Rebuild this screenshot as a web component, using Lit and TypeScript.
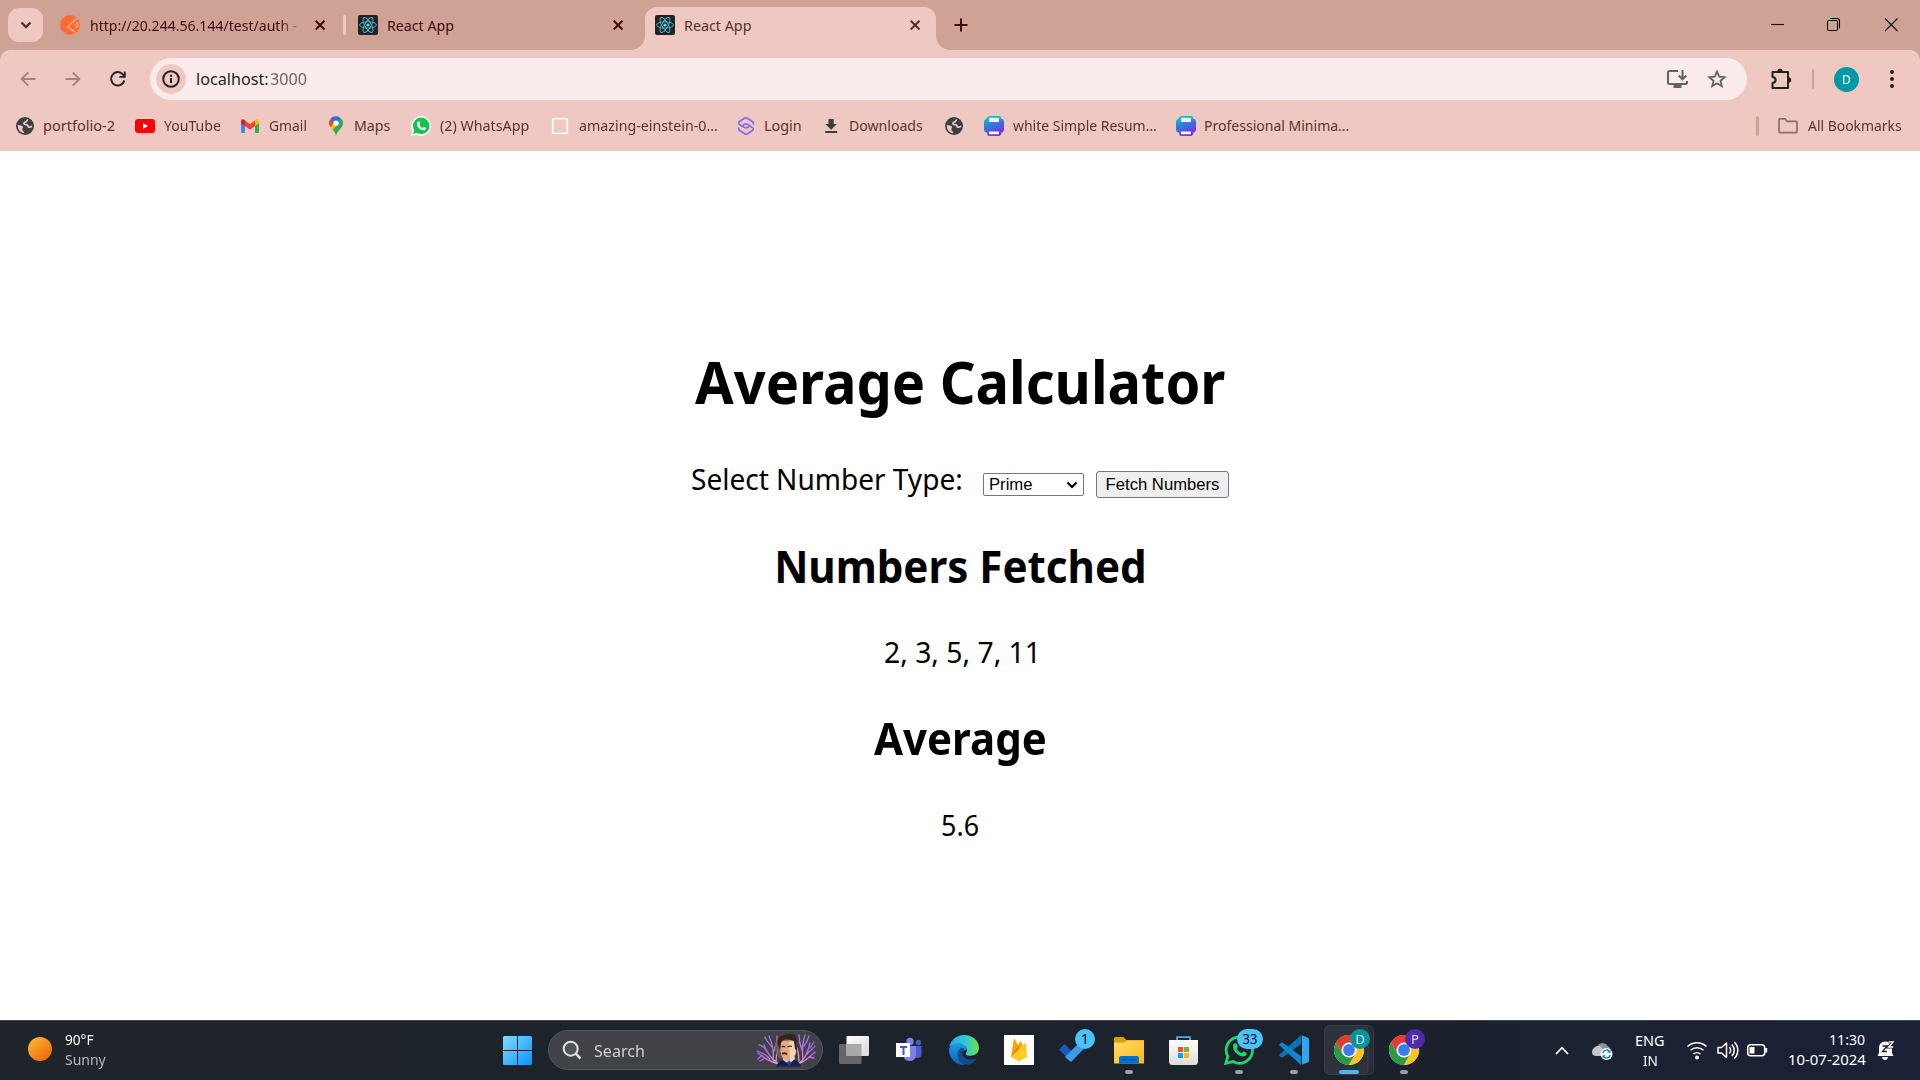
import { LitElement, html, css, svg, nothing } from "lit";
import { customElement, property } from "lit/decorators.js";

/* Single line of text whose glyphs span exactly `w` pixels. */
@customElement("fit-text")
class FitText extends LitElement {
  @property() text = "";
  @property({ type: Number }) w = 10;

  static styles = css`
    :host { display: inline-block; white-space: pre; flex: none; }
    .line { display: inline-block; transform-origin: 0 50%; width: 0; }
  `;

  render() {
    const cs = getComputedStyle(this);
    const ctx = document.createElement("canvas").getContext("2d")!;
    ctx.font = `${cs.fontWeight} ${cs.fontSize} ${cs.fontFamily}`;
    const m = ctx.measureText(this.text);
    const ink = m.actualBoundingBoxLeft + m.actualBoundingBoxRight || m.width;
    const scale = this.w / ink;
    this.style.width = `${this.w}px`;
    return html`<span class="line" style="transform: scaleX(${scale.toFixed(4)}) translateX(${m.actualBoundingBoxLeft.toFixed(2)}px)">${this.text}</span>`;
  }
}

const t = (text: string, w: number, cls = "") => html`<fit-text class=${cls} .text=${text} .w=${w}></fit-text>`;

/* ---------- browser icons ---------- */
const closeIcon = html`<svg class="close" width="20" height="20" viewBox="0 0 20 20"><path d="M5.700 5.700l8.800 8.800M14.500 5.700l-8.800 8.800" stroke="currentColor" stroke-width="2" fill="none"/></svg>`;

const reactIcon = html`<svg width="20" height="20" viewBox="0 0 20 20">
  <rect width="20" height="20" rx="2" fill="#222"/>
  <g fill="none" stroke="#4fb3cc" stroke-width=".95">
    <ellipse cx="10" cy="10" rx="8.400" ry="3.200"/>
    <ellipse cx="10" cy="10" rx="8.400" ry="3.200" transform="rotate(60 10 10)"/>
    <ellipse cx="10" cy="10" rx="8.400" ry="3.200" transform="rotate(120 10 10)"/>
  </g><circle cx="10" cy="10" r="1.600" fill="#61dafb"/></svg>`;

const postmanIcon = html`<svg width="20" height="20" viewBox="0 0 20 20">
  <circle cx="10" cy="10" r="10" fill="#ff6c37"/>
  <path d="M17 3.300L7.600 11.600l7.400 5.600" fill="none" stroke="#e9b9a6" stroke-width="1.200"/>
  <path d="M17.200 7.300q2.300 2.400.1 5.200l-2-2.200z" fill="none" stroke="#e9b9a6" stroke-width=".8"/></svg>`;

const globe = html`<svg width="20" height="20" viewBox="0 0 20 20">
  <circle cx="10" cy="10" r="9" fill="#3c4043"/>
  <path d="M12.400 3.300c.2 1.500-.9 2.100-1.900 2.700-1 .5-2 .9-1.500 1.900.5.8 2.500.5 3.400 1.200.8.6.3 1.800 1.500 2.100 1 .2 1.600-.7 3.200-.8" fill="none" stroke="#efc9c1" stroke-width="1.700"/>
  <path d="M2.800 8.800c2 1 4.400.6 5.200 2 .4 1-.6 1.600-.8 2.400 0 1.600 1.900 1.900 2.300 4C4.800 17 2.400 13 2.800 8.800z" fill="#efc9c1"/></svg>`;

const youtube = html`<svg width="20" height="20" viewBox="0 0 20 20"><rect y="3" width="20" height="14" rx="3" fill="#f00"/><path d="M8 7v6l5-3z" fill="#fff"/></svg>`;
const gmail = html`<svg width="20" height="20" viewBox="0 0 20 20">
  <path d="M1 6v9.700Q1 17 2.300 17H5V9z" fill="#4285f4"/><path d="M19 6v9.700q0 1.300-1.300 1.300H15V9z" fill="#34a853"/>
  <path d="M5 4.500L10 8.300l5-3.800V10l-5 3.700L5 10z" fill="#ea4335"/>
  <path d="M1 5.500Q1 3.300 2.900 3.200 3.700 3.200 5 4.500V10L1 7.200z" fill="#c5221f"/><path d="M19 5.500q0-2.200-1.900-2.300-.8 0-2.100 1.300V10l4-2.800z" fill="#fbbc04"/></svg>`;
const maps = html`<svg width="20" height="20" viewBox="0 0 20 20">
  <path d="M10 20c-.8-3.500-2-4.900-3.500-6.800L14.900 2.700Q17 4.500 17 7.300c0 5-5.500 6.500-7 12.700z" fill="#34a853"/>
  <path d="M3 7.300Q3 4.500 4.700 2.600L9 6.100 4.600 11Q3 9.200 3 7.300z" fill="#ea4335"/>
  <path d="M4.700 2.600Q6.600.3 10 .3q3 0 4.900 2.300L11.600 6.500 10 7.200 8 5.400z" fill="#1a73e8"/>
  <path d="M6 12.600l5.500-6 3.400-4Q17 4.500 17 7.300l-7 3z" fill="#34a853"/>
  <path d="M4.600 10.700L8 7l3.800 1.500-5 5.100z" fill="#fbbc04"/>
  <circle cx="10" cy="7.200" r="2.600" fill="#fff"/></svg>`;
const whatsapp = html`<svg width="20" height="20" viewBox="0 0 20 20">
  <path d="M0 20l1.500-5.300A9.900 9.900 0 1 1 5.300 18.600z" fill="#fff"/><circle cx="10.200" cy="9.800" r="8.300" fill="#12c24a"/>
  <path d="M2 18l1.200-4.300 3 3.100z" fill="#12c24a"/>
  <path d="M6.300 6.200c.9-1.300 1.900-1 2.200-.2l.6 1.500c.1.500-.7 1-.7 1.400.6 1.400 1.700 2.400 3.200 3 .5 0 .9-1.100 1.400-1l1.800.9c.6.500 0 1.800-.9 2.200-2 1-4.900-.4-6.500-2.400C6.100 9.900 5.400 8 6.300 6.200z" fill="#fff"/></svg>`;
const box = html`<svg width="20" height="20" viewBox="0 0 20 20"><rect x="2.700" y="2.700" width="14.600" height="14.600" fill="none" stroke="#fff" stroke-width="1.600"/></svg>`;
const login = html`<svg width="20" height="20" viewBox="0 0 20 20"><g fill="none" stroke="#7b6ff2" stroke-width="1.700" stroke-linejoin="round">
  <path d="M17.300 8.600V6.200L11.500 2.300Q10 1.400 8.500 2.300L3.200 5.700Q2.200 7 3.200 8.200L8.600 11.600Q10 12.300 11.400 11.600L13.400 10.200"/>
  <path d="M2.700 11.400V13.800L8.500 17.700Q10 18.600 11.500 17.700L16.800 14.300Q17.800 13 16.800 11.800L11.400 8.200Q10 7.500 8.600 8.200L6.600 9.800"/></g></svg>`;
const download = html`<svg width="20" height="20" viewBox="0 0 20 20"><path d="M7.500 3h5.200v5h3.200L10.100 13.700 4.300 8h3.200zM4.200 15h12v2h-12z" fill="#3c4043"/></svg>`;
const printer = (id: string) => html`<svg width="20" height="20" viewBox="0 0 20 20">
  <defs><linearGradient id=${id} x1=".2" y1="0" x2=".6" y2="1"><stop offset="0" stop-color="#00cfd0"/><stop offset=".5" stop-color="#3a70dd"/><stop offset="1" stop-color="#7d2ae8"/></linearGradient></defs>
  <path d="M5.500 0h9Q17 0 17 2.500q3 .6 3 3.500v7.500q0 2.500-2.500 3Q17 20 14.500 20h-9Q3 20 3 16.500.0 16 0 13.500V6Q0 3 3 2.500 3 0 5.500 0z" fill="url(#${id})"/>
  <path d="M5 1.800h10V6H5zM5 15.500h10v2.700H5z" fill="#fff"/></svg>`;

const bookmarks = [
  { icon: globe, text: "portfolio-2", w: 70.700, cell: 120 },
  { icon: youtube, text: "YouTube", w: 56.700, cell: 105 },
  { icon: gmail, text: "Gmail", w: 37.300, cell: 86 },
  { icon: maps, text: "Maps", w: 35.300, cell: 85 },
  { icon: whatsapp, text: "(2) WhatsApp", w: 89.300, cell: 139 },
  { icon: box, text: "amazing-einstein-0...", w: 138, cell: 186 },
  { icon: login, text: "Login", w: 35.700, cell: 85 },
  { icon: download, text: "Downloads", w: 72.700, cell: 123 },
  { icon: globe, text: "", w: 0, cell: 40 },
  { icon: printer("pa"), text: "white Simple Resum...", w: 143, cell: 192 },
  { icon: printer("pb"), text: "Professional Minima...", w: 143.500, cell: 190 },
];

/* ---------- taskbar icons, each in a 55x60 cell centred on x = 27 ---------- */
const dot = svg`<rect x="23" y="50" width="8" height="4" rx="2" fill="#9a9da3"/>`;
const chromeMark = svg`
  <circle cx="27" cy="30" r="15" fill="#fff"/>
  <path d="M27 30L14 22.500A15 15 0 0 1 40 22.500z" fill="#e33b2e"/>
  <path d="M14 22.500A15 15 0 0 0 27 45L33.500 33.800 27 30 20.500 33.800z" fill="#2a9a46"/>
  <path d="M40 22.500A15 15 0 0 1 27 45L33.500 33.800 33.500 24 27 22.500z" fill="#fcc31e"/>
  <path d="M27 22.500H40A15 15 0 0 0 14 22.500L20.500 33.800z" fill="#e33b2e"/>
  <circle cx="27" cy="30" r="7.500" fill="#fff"/><circle cx="27" cy="30" r="5.900" fill="#3a7bf0"/>`;

const apps = [
  // task view
  svg`<defs><linearGradient id="tv" x1="0" y1="0" x2="1" y2="1"><stop offset="0" stop-color="#fff"/><stop offset="1" stop-color="#d8d8d8"/></linearGradient></defs>
    <rect x="12" y="24" width="22.500" height="20" rx="1" fill="#666"/><rect x="19.500" y="16" width="22.500" height="20" rx="1" fill="url(#tv)"/><path d="M19.500 24h15v12h-15z" fill="#a9a9a9"/>`,
  // teams
  svg`<g transform="translate(2 0)"><circle cx="26" cy="21.500" r="3.700" fill="#7b83eb"/><circle cx="34.500" cy="22.500" r="2.700" fill="#5059c9"/>
    <path d="M29 26h8.500v8.500q-.5 3.500-4.500 3.500-3 0-4-2z" fill="#5059c9"/><path d="M19 26h13v9q-.5 6-6.500 6Q20 41 19 35z" fill="#7b83eb"/>
    <rect x="12" y="23" width="14" height="14" fill="#fff"/><path d="M16 27h7M19.500 27v8" stroke="#4b53bc" stroke-width="2"/></g>`,
  // edge
  svg`<defs><linearGradient id="e1" x1="0" y1=".5" x2="1" y2=".5"><stop offset="0" stop-color="#2aa6e4"/><stop offset=".5" stop-color="#30c6d8"/><stop offset="1" stop-color="#6be34b"/></linearGradient>
    <linearGradient id="e2" x1="0" y1="0" x2="0" y2="1"><stop offset="0" stop-color="#1a9be6"/><stop offset="1" stop-color="#0c62bd"/></linearGradient></defs>
    <path d="M12.300 27C13.500 20 19.500 15 27 15c8.500 0 15 6 15 12.800 0 5-3.800 8-8.500 8-4 0-5.800-1.500-4.200-3.300C31 30 29.500 24.500 23 24.500c-5 0-9 1-10.700 2.500z" fill="url(#e1)"/>
    <path d="M12.100 28.500C14 25 18 22.900 22.500 23.300c4.500.4 7.500 3.700 6.800 6.700-7 .5-8.300 9.500-2.300 15A15 15 0 0 1 12.100 28.500z" fill="url(#e2)"/>
    <path d="M24.500 27.500c-5.500 3.500-5.500 11.500.5 15.800 5 3.300 11 1.200 14.800-5-6 2.700-12.300 1-14-3.300-1.100-3 .7-5.500 2-6z" fill="#114a8b"/>`,
  // firebase
  svg`<rect x="12" y="15" width="30" height="30" fill="#fff"/>
    <path d="M19 37l2.800-17.500q.5-.9 1.100 0L26 25.300l2-3.800q.6-.7 1.200 0L35 37z" fill="#ffa000"/><path d="M19 37l7-11 3 5.500z" fill="#f57c00"/>
    <path d="M19 37L33 23.200q1-.5 1.200.3L35 37 27.900 41q-1 .4-1.900 0z" fill="#ffca28"/>`,
  // to do
  svg`<path d="M12 29.500l5.500-5.500 7.500 7.500-5.500 5.500z" fill="#185abd"/><path d="M18 37l18-18 5 5.500L24 42z" fill="#3f9be8"/>
    <circle cx="38" cy="19" r="10" fill="#4cc2ff"/><text x="38" y="24" font-size="14.500" fill="#111" text-anchor="middle">1</text>`,
  // explorer
  svg`<defs><linearGradient id="fx" x1="0" y1="0" x2="1" y2="1"><stop offset="0" stop-color="#ffdc6b"/><stop offset="1" stop-color="#fdb913"/></linearGradient></defs>
    <path d="M12 18.500Q12 17 13.500 17h8l3 3H42v10H12z" fill="#dc9c0f"/><path d="M12 22.500h11l2-2h17v23H12z" fill="url(#fx)"/>
    <path d="M17 43.500V38q0-2 2-2h16q2 0 2 2v5.500z" fill="#0d6fc4"/><path d="M20.500 39.500h13" stroke="#094c8f" stroke-width="1"/>${dot}`,
  // store
  svg`<defs><linearGradient id="st" x1="0" y1="0" x2="0" y2="1"><stop offset="0" stop-color="#fff"/><stop offset="1" stop-color="#dcdcdc"/></linearGradient></defs>
    <path d="M20 21v-3.800h13V21" fill="none" stroke="#37b6ea" stroke-width="1.800"/><path d="M12 20h29v21.500q0 3.500-3.500 3.500h-22Q12 45 12 41.500z" fill="url(#st)"/>
    <path d="M21 27h5v5h-5z" fill="#f25022"/><path d="M27 27h5v5h-5z" fill="#7fba00"/><path d="M21 33h5v5h-5z" fill="#00a4ef"/><path d="M27 33h5v5h-5z" fill="#ffb900"/>`,
  // whatsapp
  svg`<path d="M13.800 43.400l2-7A13.200 13.200 0 1 1 21 41.600z" fill="none" stroke="#25d366" stroke-width="2.800"/>
    <path d="M21.500 24.300c1.500-1.800 3-1.300 3.500 0l.9 2.200c.1.800-1.200 1.600-1 2.200.9 2 2.400 3.500 4.600 4.300.8 0 1.400-1.700 2.200-1.500l2.700 1.300c.9.700 0 2.700-1.300 3.300-3 1.400-7.300-.7-9.600-3.600-2-2.500-3.400-5.500-2-8.200z" fill="#25d366"/>
    <rect x="25" y="9" width="26" height="20" rx="10" fill="#4cc2ff"/><text x="38" y="24" font-size="14.500" fill="#111" text-anchor="middle" textLength="15" lengthAdjust="spacingAndGlyphs">33</text>${dot}`,
  // vs code
  svg`<path d="M12.300 34.800L34 15v9L15.500 37.500q-.8.300-1.500-.3l-1.700-1.600q-.4-.4 0-.8z" fill="#0a72b8"/>
    <path d="M12.300 25.200L34 45v-9L15.500 22.500q-.8-.3-1.500.3l-1.700 1.600q-.4.400 0 .8z" fill="#0d86d0"/>
    <path d="M34 15l6.500 2.500q1.500.7 1.500 2v21q0 1.300-1.500 2L34 45q1 0 1-1.500v-27Q35 15 34 15z" fill="#2ea7f0"/>${dot}`,
  // chrome, active profile
  svg`<rect x="8.500" y="5.500" width="43" height="49" rx="5" fill="#272c35" stroke="#343942"/><rect x="2.500" y="5.500" width="43.500" height="49" rx="5" fill="#2d323b" stroke="#3a3f48"/>${chromeMark}
    <circle cx="38" cy="19" r="10" fill="#0c929c"/><text x="38" y="23.700" font-size="13" fill="#c9eef0" text-anchor="middle">D</text><rect x="17" y="50" width="20" height="4" rx="2" fill="#4cb6f0"/>`,
  // chrome, second profile
  svg`${chromeMark}<circle cx="38" cy="19" r="10" fill="#4f2da8"/><text x="38" y="23.700" font-size="13" fill="#dccff5" text-anchor="middle">P</text>${dot}`,
];

const inventor = html`<svg width="60" height="34" viewBox="0 0 60 34">
  <defs><linearGradient id="br" x1="0" y1="0" x2="1" y2="1"><stop offset="0" stop-color="#7d7cf5"/><stop offset=".5" stop-color="#b06ae8"/><stop offset="1" stop-color="#f79ac0"/></linearGradient>
  <linearGradient id="bl" x1="1" y1="0" x2="0" y2="1"><stop offset="0" stop-color="#7d7cf5"/><stop offset=".5" stop-color="#c26ae8"/><stop offset="1" stop-color="#f9a7b5"/></linearGradient></defs>
  <g fill="none" stroke-linecap="round" stroke-width="1.300">
    <path stroke="url(#br)" d="M23 31C16 27 12 22 8 12M23 31C14 29 8 25 2 20M14 26C10 21 6 20 1 18M17 28C18 20 17 12 13 3M17 20C20 14 21 8 21 3M11 19C9 14 5 12 3 12M16 14C13 10 10 8 9 4M6 22L2 26M9 25L4 28M19 14L24 9M20 29C20 23 21 20 22 17"/>
    <path stroke="url(#bl)" d="M42 31C48 27 51 22 54 10M42 31C50 28 54 24 59 19M47 26C46 18 46 10 49 2M46 17C44 12 43 8 43 2M51 21C54 17 57 16 59 13M48 13C51 9 52 6 53 3M53 24L58 25M43 28C43 22 42 18 41 15M54 15L58 9"/>
  </g>
  <ellipse cx="30" cy="14" rx="11" ry="13" fill="#6b625c" opacity=".75"/>
  <path d="M20 33.500q2-5.500 7-6.500l12 0q5 2 6 6.500z" fill="#14204f"/><path d="M27 27l6 4 6-5-1-5H28z" fill="#dedfe9"/><path d="M31 29l2.500-1.500 2 2.500-2 3z" fill="#2c3f8f"/>
  <path d="M24 8q0 13 2 15.500 3 4.500 7 4.500 5-3 7-8.500V7z" fill="#e2a982"/><path d="M33 9l7-1v12q-2 5-6 7.500z" fill="#f6d2ae"/>
  <path d="M21.500 11Q21 3.500 26 2.500q5-2.500 12-1 3 1.500 2.500 8.500l.5 8-2-2-1-8q-5-2-8-2-4 1-5 4l-1 7z" fill="#35211c"/>
  <path d="M25.500 13.800q2-1 3.800.2M31.500 13.800q2-1.300 4.500-.3" stroke="#40251c" stroke-width="1.300" fill="none"/><path d="M26 21q2.500-1.500 5 .4" stroke="#54251a" stroke-width="2" fill="none"/></svg>`;

const options = ["Prime", "Fibonacci", "Even", "Random"];

@customElement("app-root")
class AppRoot extends LitElement {
  static styles = css`
    :host { display: flex; flex-direction: column; width: 1920px; height: 1080px; overflow: hidden; background: #fff;
      font-family: "Noto Sans", "Open Sans", sans-serif; font-size: 14.500px; color: #000; }
    * { box-sizing: border-box; }
    svg { display: block; flex: none; overflow: visible; }
    .row { display: flex; align-items: center; }
    .strip { height: 50px; background: #cea396; padding-left: 8px; color: #3f0a0a; flex: none; }
    .menu { width: 35px; height: 34px; border-radius: 11px; background: #efc9c1; display: grid; place-items: center; margin-right: 7px; }
    .tab { position: relative; height: 50px; display: flex; align-items: center; padding-left: 10px; }
    .first { width: 298px; } .second { width: 297px; }
    .title { width: 219px; margin-left: 10.500px; line-height: 20px; height: 20px; white-space: nowrap; }
    .second .title, .active .title { margin-left: 10px; width: 219.500px; }
    .fade { -webkit-mask-image: linear-gradient(90deg, #000 188px, transparent 212px); }
    .close { margin-left: .5px; }
    .split { width: 3px; height: 20px; border-radius: 1.500px; background: #efc9c1; margin-left: 13px; }
    .active { width: 291px; height: 43px; margin-top: 7px; border-radius: 12px 12px 0 0; background: #efc9c1; padding-bottom: 7px; color: #53302c; }
    .active::before, .active::after { content: ""; position: absolute; bottom: 0; width: 14px; height: 14px; }
    .active::before { left: -14px; background: radial-gradient(circle at 0 0, transparent 13.500px, #efc9c1 14.200px); }
    .active::after { right: -14px; background: radial-gradient(circle at 100% 0, transparent 13.500px, #efc9c1 14.200px); }
    .plus { margin-left: 15px; }
    .window { margin-left: auto; }
    .under { background: #cea396; height: 101px; flex: none; }
    .chrome { background: #efc9c1; height: 101px; border-radius: 10px 10px 0 0; }
    .toolbar { height: 50px; padding: 8px 0 0 5px; align-items: center; }
    .nav { width: 45px; display: grid; place-items: center; }
    .omni { width: 1597px; height: 42px; border-radius: 21px; background: #f9ebe9; padding-left: 6px; font-size: 17px; color: #1f1f1f; margin-left: 10px; }
    .info { width: 30px; height: 30px; border-radius: 50%; background: #efc9c1; display: grid; place-items: center; margin-right: 11px; }
    .url { line-height: 24px; display: flex; }
    .port { color: #6f6462; margin-left: 2px; }
    .install { margin-left: auto; }
    .star { margin: 0 20px 0 19px; }
    .puzzle { margin-left: 23px; }
    .bar { width: 2px; height: 20px; background: #cea396; margin-left: 20px; border-radius: 1px; }
    .avatar { width: 25px; height: 25px; border-radius: 50%; background: #0097a7; display: grid; place-items: center; margin-left: 20px; color: #fff; font-size: 12.500px; line-height: 25px; }
    .dots { margin-left: 22.500px; }
    .marks { height: 51px; padding-left: 15px; color: #5c332b; font-size: 14.500px; line-height: 20px; }
    .mark { display: flex; align-items: center; gap: 8.500px; flex: none; }
    .mark fit-text { position: relative; top: -.5px; }
    .all { margin-left: auto; display: flex; align-items: center; padding-right: 18.500px; }
    .all fit-text { margin-bottom: 1px; }
    .rule { width: 3px; height: 20px; border-radius: 1.500px; background: #cea396; margin-right: 19px; }
    .folder { margin-right: 10px; }

    .page { flex: 1; display: flex; flex-direction: column; align-items: center; padding-top: 190px; background: #fff; }
    h1, h2, p { margin: 0; font-weight: 400; }
    h1 { font-size: 59px; line-height: 80px; height: 80px; font-weight: 700; }
    h2 { font-size: 44px; line-height: 60px; height: 60px; font-weight: 700; }
    p, .label { font-size: 29px; line-height: 40px; height: 40px; }
    .form { display: flex; align-items: flex-start; margin: 38px 0 37px; height: 40px; }
    .label + .select { margin-left: 22px; }
    .select { display: grid; align-items: center; justify-items: end; margin-top: 14px; }
    .select > * { grid-area: 1 / 1; }
    select { appearance: none; width: 101px; height: 23px; border: 1px solid #767676; border-radius: 2px; background: #fff; color: #000;
      font: 16.667px "Liberation Sans", sans-serif; padding: 0 0 0 5.500px; margin: 0; line-height: 21px; }
    .arrow { margin-right: 6px; pointer-events: none; }
    button { width: 133px; height: 27px; margin: 12px 0 0 12px; padding: 0 0 0 1px; border: 1px solid #767676; border-radius: 3px; background: #efefef; color: #000;
      font: 16.667px "Liberation Sans", sans-serif; line-height: 24px; }
    .gap36 { margin-top: 36px; } .gap37 { margin-top: 37px; }

    .task { height: 60px; flex: none; background: linear-gradient(90deg, #1e242a 0%, #1d232b 45%, #1b222c 70%, #1b2136 100%); border-top: 1px solid #40484b;
      color: #fff; display: flex; align-items: flex-start; font-size: 14.500px; line-height: 20px; }
    .weather { display: flex; padding: 16px 0 0 28px; width: 503px; }
    .lines { display: flex; flex-direction: column; }
    .weather .lines { margin: -8.500px 0 0 12.700px; }
    .sub { color: #b7babd; }
    .start { margin-top: 15px; }
    .search { width: 275px; height: 40px; margin: 9px 4px 0 16px; border-radius: 20px; background: #404247; border: 1px solid #54575b; padding-left: 13px; color: #cfd0d2; font-size: 17px; }
    .search fit-text { margin: 1px 0 0 12px; line-height: 24px; }
    .hero { margin-left: auto; padding-right: 6px; }
    .apps { display: flex; margin-top: -1px; font-size: 14.500px; }
    .tray { margin-left: auto; display: flex; }
    .tray svg { margin-top: -1px; }
    .center { align-items: center; } .right { align-items: flex-end; }
    .lang { width: 28px; margin: 8.500px 22px 0 24px; }
    .clock { width: 77px; margin: 7.500px 11px 0 20px; }
  `;

  render() {
    return html`
      <div class="strip row">
        <div class="menu"><svg width="12" height="8" viewBox="0 0 12 8"><path d="M1.500 1.500L6 6l4.500-4.500" fill="none" stroke="#532c27" stroke-width="2.300"/></svg></div>
        <div class="tab first">${postmanIcon}<div class="title fade">${t("http://20.244.56.144/test/auth -", 206.600)}</div>${closeIcon}<div class="split"></div></div>
        <div class="tab second">${reactIcon}<div class="title">${t("React App", 66)}</div>${closeIcon}</div>
        <div class="tab active">${reactIcon}<div class="title">${t("React App", 66.500)}</div>${closeIcon}</div>
        <svg class="plus" width="20" height="20" viewBox="0 0 20 20"><path d="M10 3.500v13M3.500 10h13" stroke="#3f0a0a" stroke-width="2"/></svg>
        <svg class="window" width="170" height="50" viewBox="1750 0 170 50" fill="none" stroke="#111" stroke-width="1.100">
          <path d="M1771 24.500h13"/><rect x="1827.500" y="20.500" width="10" height="10" rx="1.500"/><path d="M1830 18.500h7q2.500 0 2.500 2.500v7.500"/>
          <path d="M1885 18.500l12.500 12.500M1897.500 18.500l-12.500 12.500"/></svg>
      </div>
      <div class="under"><div class="chrome">
        <div class="toolbar row">
          <div class="nav"><svg width="16" height="16" viewBox="0 0 16 16"><path d="M15.500 8H2M8.300 1.300L1.600 8l6.700 6.700" fill="none" stroke="#a3827b" stroke-width="1.900"/></svg></div>
          <div class="nav"><svg width="16" height="16" viewBox="0 0 16 16"><path d="M.5 8H14M7.700 1.300L14.400 8l-6.700 6.700" fill="none" stroke="#a3827b" stroke-width="1.900"/></svg></div>
          <div class="nav"><svg width="16" height="16" viewBox="0 0 16 16"><path d="M14.300 9.500A6.700 6.700 0 1 1 12.800 3.300L14.500 5" fill="none" stroke="#222" stroke-width="2"/><path d="M15.700.5v6.300H9.400V5h4.500V.5z" fill="#222"/></svg></div>
          <div class="omni row">
            <div class="info"><svg width="18" height="18" viewBox="0 0 18 18"><circle cx="9" cy="9" r="7.800" fill="none" stroke="#222" stroke-width="2"/><path d="M9 8v5M9 4.700v2" stroke="#222" stroke-width="2"/></svg></div>
            <div class="url">${t("localhost:", 71)}${t("3000", 36.400, "port")}</div>
            <svg class="install" width="22" height="20" viewBox="0 0 22 20" fill="none" stroke="#5f6368" stroke-width="2"><path d="M12 2H3.500Q2 2 2 3.500v10Q2 15 3.500 15h16q1.500 0 1.500-1.500V12"/><path d="M16.500 1v9M12.700 6.500l3.800 3.800 3.800-3.800"/><path d="M7.500 17.500h8" stroke-width="3"/></svg>
            <svg class="star" width="20" height="20" viewBox="0 0 20 20"><path d="M10 2.500l2.200 5.100 5.500.5-4.200 3.600 1.300 5.500L10 14.300l-4.800 2.900 1.300-5.500-4.200-3.600 5.500-.5z" fill="none" stroke="#5f6368" stroke-width="1.800"/></svg>
          </div>
          <svg class="puzzle" width="22" height="22" viewBox="0 0 22 22"><path d="M2.500 4h15.500v16H2.500v-5Q5.700 14.500 5.700 12T2.500 9z" fill="none" stroke="#222" stroke-width="2" stroke-linejoin="round"/><path d="M7.300 3.500a2.700 2.700 0 0 1 5.400 0zM18.500 9.300a2.700 2.700 0 0 1 0 5.400z" fill="#222"/></svg>
          <div class="bar"></div>
          <div class="avatar">${t("D", 7.500)}</div>
          <svg class="dots" width="20" height="22" viewBox="0 0 20 22" fill="#222"><circle cx="10" cy="4" r="2"/><circle cx="10" cy="11" r="2"/><circle cx="10" cy="18" r="2"/></svg>
        </div>
        <div class="marks row">
          ${bookmarks.map((b) => html`<div class="mark" style="width:${b.cell}px">${b.icon}${b.text ? t(b.text, b.w) : nothing}</div>`)}
          <div class="all"><div class="rule"></div>
            <svg class="folder" width="20" height="16" viewBox="0 0 20 16"><path d="M1 13.500v-12q0-.7.700-.7H7l2.200 2.500h9q.8 0 .8.800v9.400q0 1.200-1 1.200H2q-1 0-1-1.200z" fill="none" stroke="#8f6f67" stroke-width="1.700"/></svg>
            ${t("All Bookmarks", 93.700)}</div>
        </div>
      </div></div>

      <main class="page">
        <h1>${t("Average Calculator", 530)}</h1>
        <div class="form">
          <div class="label">${t("Select Number Type:", 269)}</div>
          <div class="select"><select>${options.map((o) => html`<option>${o}</option>`)}</select>
            <svg class="arrow" width="12" height="8" viewBox="0 0 12 8"><path d="M1.500 1.500L6 6l4.500-4.500" fill="none" stroke="#000" stroke-width="2.200"/></svg></div>
          <button>Fetch Numbers</button>
        </div>
        <h2>${t("Numbers Fetched", 367)}</h2>
        <p class="gap36">${t("2, 3, 5, 7, 11", 150.500)}</p>
        <h2 class="gap36">${t("Average", 171.500)}</h2>
        <p class="gap37">${t("5.6", 36.500)}</p>
      </main>

      <div class="task">
        <div class="weather">
          <svg width="24" height="24" viewBox="0 0 24 24"><defs><linearGradient id="sun" x1=".1" y1=".1" x2=".8" y2=".9"><stop offset="0" stop-color="#f5b731"/><stop offset="1" stop-color="#f06a0c"/></linearGradient></defs><circle cx="12" cy="12" r="12" fill="url(#sun)"/></svg>
          <div class="lines"><span>${t("90°F", 29)}</span><span class="sub">${t("Sunny", 41.300)}</span></div>
        </div>
        <svg class="start" width="29" height="29" viewBox="0 0 29 29"><defs><linearGradient id="win" gradientUnits="userSpaceOnUse" x1="0" y1="0" x2="29" y2="29"><stop offset="0" stop-color="#7fdcff"/><stop offset="1" stop-color="#0a93f5"/></linearGradient></defs>
          <path d="M1 0h13v14H0V1zM15 0h13l1 1v13H15zM0 15h14v14H1l-1-1zM15 15h14v13l-1 1H15z" fill="url(#win)"/></svg>
        <div class="search row">
          <svg width="20" height="20" viewBox="0 0 20 20"><circle cx="8.700" cy="8.700" r="7" fill="#50545a" stroke="#dfe0e2" stroke-width="2"/><path d="M13.700 13.700L18.500 18.500" stroke="#dfe0e2" stroke-width="2.500"/></svg>
          ${t("Search", 50.500)}
          <div class="hero">${inventor}</div>
        </div>
        <div class="apps">${apps.map((a) => html`<svg width="55" height="60" viewBox="0 0 55 60">${a}</svg>`)}</div>
        <div class="tray">
          <svg width="59" height="60" viewBox="1554 0 59 60">
            <path d="M1557 34l6-6.300 6 6.300" fill="none" stroke="#fff" stroke-width="1.800"/>
            <circle cx="1603.500" cy="29" r="6" fill="#8c8f93"/><path d="M1604 26h3a5 5 0 0 1 3 9h-8z" fill="#8c8f93"/>
            <circle cx="1599" cy="31" r="5" fill="#c4c6c8"/><path d="M1597 28q7-1 9 8h-9a4 4 0 0 1 0-8z" fill="#c4c6c8"/>
            <circle cx="1607.500" cy="34" r="6" fill="#fff"/><path d="M1603.800 33a3.800 3.800 0 0 1 6.800-1.300M1611.200 35a3.800 3.800 0 0 1-6.800 1.300" fill="none" stroke="#1779d4" stroke-width="1.400"/><path d="M1611.500 29.500v3.300h-3.300zM1603.500 38.500v-3.300h3.300z" fill="#1779d4"/>
          </svg>
          <div class="lines center lang"><span>${t("ENG", 28)}</span><span>${t("IN", 14)}</span></div>
          <svg width="82" height="60" viewBox="1687 1 82 60" fill="none" stroke="#fff" stroke-width="1.500">
            <path d="M1688.500 27.500a13.600 13.600 0 0 1 19 0M1691.500 31.300a9.400 9.400 0 0 1 13 0M1694.500 35a5.200 5.200 0 0 1 7 0"/><circle cx="1698" cy="38.500" r="2" fill="#fff" stroke="none"/>
            <path d="M1719 28.500h3.500l5-4.500v14.500l-5-4.500h-3.500z" stroke-linejoin="round"/><path d="M1730.300 28a4.500 4.500 0 0 1 0 6.500M1732.800 25.500a8 8 0 0 1 0 11.500M1735.300 23a11.500 11.500 0 0 1 0 16.500"/>
            <rect x="1748.700" y="25.700" width="17" height="11" rx="3"/><path d="M1750.500 28h5v6.500h-5z" fill="#fff" stroke="none"/><path d="M1767.200 29v4.500" stroke-width="2"/>
          </svg>
          <div class="lines right clock"><span>${t("11:30", 34.800)}</span><span>${t("10-07-2024", 76.500)}</span></div>
          <svg width="44" height="60" viewBox="1876 0 44 60"><path d="M1877.500 36l1.500-3v-5q0-6.500 6.500-6.500 6.500 0 6.500 6.500v5l1.500 3z" fill="#fff"/><path d="M1882 37h6q-.6 3-3 3t-3-3z" fill="#fff"/>
            <path d="M1882.500 26h4.500l-4.500 5.500h4.500" fill="none" stroke="#1b2133" stroke-width="1.300"/><path d="M1888.700 21.800h4.500l-4.500 5.200h4.500" fill="none" stroke="#1b2133" stroke-width="3"/><path d="M1888.700 21.800h4.500l-4.500 5.200h4.500" fill="none" stroke="#fff" stroke-width="1.300"/></svg>
        </div>
      </div>`;
  }
}
